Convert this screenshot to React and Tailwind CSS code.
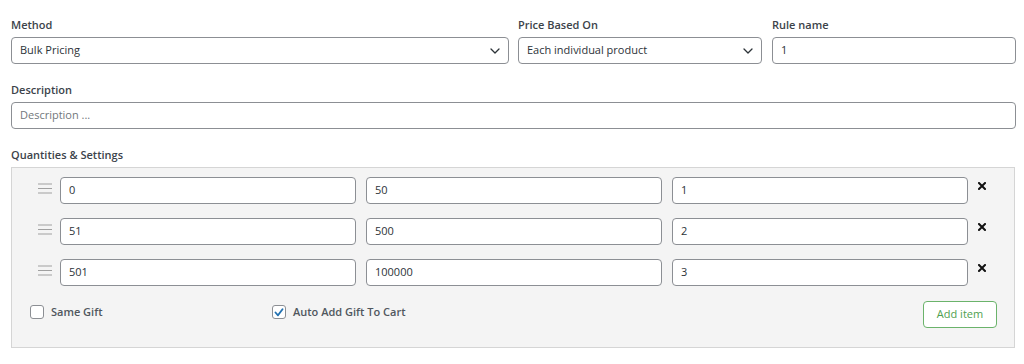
import React from 'react';

const font = { fontFamily: '"Open Sans", "Liberation Sans", sans-serif' };

const Chevron = () => (
  <svg width="10" height="6" viewBox="0 0 10 6" className="shrink-0">
    <path d="M1 1l4 4 4-4" fill="none" stroke="#2c3338" strokeWidth="1.3" strokeLinecap="round" strokeLinejoin="round" />
  </svg>
);

const Label = ({ children }) => (
  <div className="text-[11px] leading-[16px] font-semibold text-[#3c434a] mb-[4px]">{children}</div>
);

const Select = ({ value }) => (
  <div className="h-[27px] flex items-center justify-between border border-[#8c8f94] rounded-[4px] bg-white pl-[8px] pr-[8px]">
    <span className="text-[11px] text-[#2c3338]">{value}</span>
    <Chevron />
  </div>
);

const Input = ({ value, placeholder }) => (
  <div className="h-[27px] flex items-center border border-[#8c8f94] rounded-[4px] bg-white px-[8px]">
    {value ? (
      <span className="text-[11px] text-[#2c3338]">{value}</span>
    ) : (
      <span className="text-[11px] text-[#72777c]">{placeholder}</span>
    )}
  </div>
);

const Handle = () => (
  <svg width="14" height="11" viewBox="0 0 14 11" className="shrink-0 -mt-[5px]">
    <path d="M0 1h14M0 5.5h14M0 10h14" stroke="#a0a0a0" strokeWidth="1.2" />
  </svg>
);

const Remove = () => (
  <svg width="8" height="8" viewBox="0 0 8 8" className="shrink-0 -mt-[9px] ml-[10px]">
    <path d="M1 1l6 6M7 1L1 7" stroke="#111" strokeWidth="2" strokeLinecap="square" />
  </svg>
);

const Checkbox = ({ checked }) => (
  <div className="w-[14px] h-[14px] rounded-[3px] border border-[#8c8f94] bg-white flex items-center justify-center">
    {checked && (
      <svg width="10" height="9" viewBox="0 0 10 9">
        <path d="M1.5 4.5l2.5 2.8L8.5 1.2" fill="none" stroke="#2271b1" strokeWidth="1.8" strokeLinecap="round" strokeLinejoin="round" />
      </svg>
    )}
  </div>
);

const rows = [
  ['0', '50', '1'],
  ['51', '500', '2'],
  ['501', '100000', '3'],
];

export default function App() {
  return (
    <div className="w-[1024px] h-[364px] bg-white pl-[11px] pr-[8px] pt-[17px]" style={font}>
      <div className="flex gap-[9px]">
        <div className="w-[498px]">
          <Label>Method</Label>
          <Select value="Bulk Pricing" />
        </div>
        <div className="w-[244px]">
          <Label>Price Based On</Label>
          <Select value="Each individual product" />
        </div>
        <div className="w-[244px] ml-[1px]">
          <Label>Rule name</Label>
          <Input value="1" />
        </div>
      </div>

      <div className="mt-[18px]">
        <Label>Description</Label>
        <div className="mt-[1px]">
          <Input placeholder="Description ..." />
        </div>
      </div>

      <div className="mt-[18px]">
        <Label>Quantities &amp; Settings</Label>
        <div className="w-[1004px] border border-[#d5d5d5] bg-[#f4f4f4] pt-[9px] pb-[19px]">
          <div className="flex flex-col gap-[14px]">
            {rows.map((r, i) => (
              <div key={i} className="flex items-center pl-[26px] pr-[28px]">
                <Handle />
                <div className="flex-1 grid grid-cols-3 gap-[10px] ml-[8px]">
                  {r.map((v, j) => (
                    <Input key={j} value={v} />
                  ))}
                </div>
                <Remove />
              </div>
            ))}
          </div>
          <div className="flex items-center mt-[15px] pl-[18px] pr-[17px]">
            <div className="flex items-center gap-[7px] w-[242px] -mt-[5px]">
              <Checkbox />
              <span className="text-[11px] font-semibold text-[#50575e]">Same Gift</span>
            </div>
            <div className="flex items-center gap-[7px] -mt-[5px]">
              <Checkbox checked />
              <span className="text-[11px] font-semibold text-[#50575e]">Auto Add Gift To Cart</span>
            </div>
            <button className="ml-auto h-[27px] w-[74px] rounded-[4px] border border-[#6bb36b] bg-white text-[11px] text-[#4f9f4f]">
              Add item
            </button>
          </div>
        </div>
      </div>
    </div>
  );
}
